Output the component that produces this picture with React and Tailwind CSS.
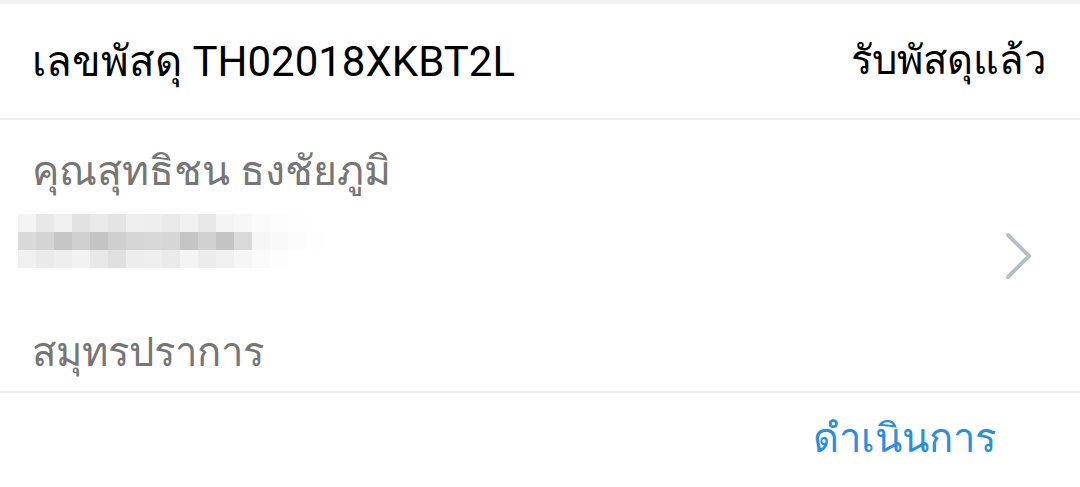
const blur = [
  ['#f4f4f4', '#e8e8e8', '#f0f0f0', '#e2e2e2', '#eaeaea', '#e4e4e4', '#efefef', '#eeeeee', '#eaeaea', '#f1f1f1', '#e8e8e8', '#f4f4f4', '#f7f7f7', '#fbfbfb', '#fdfdfd', '#fefefe', '#ffffff'],
  ['#d9d9d9', '#d4d4d4', '#c6c6c6', '#d0d0d0', '#c4c4c4', '#cfcfcf', '#d6d6d6', '#d8d8d8', '#d6d6d6', '#c5c5c5', '#d1d1d1', '#c4c4c4', '#dadada', '#f6f6f6', '#f9f9f9', '#fcfcfc', '#fefefe'],
  ['#f0f0f0', '#eaeaea', '#eeeeee', '#f2f2f2', '#e8e8e8', '#e0e0e0', '#ededed', '#efefef', '#eaeaea', '#f4f4f4', '#ececec', '#f0f0f0', '#f6f6f6', '#fafafa', '#fdfdfd', '#ffffff', '#ffffff'],
];

export default function App() {
  return (
    <div className="w-[1080px] h-[487px] bg-white overflow-hidden font-['Roboto','Noto_Sans',sans-serif]">
      <div className="h-[4px] bg-[#f2f2f2]" />

      {/* Header */}
      <div className="h-[116px] flex items-center justify-between pl-[32px] pr-[34px] border-b-2 border-[#f0f0f0]">
        <span className="text-[42px] text-black">เลขพัสดุ TH02018XKBT2L</span>
        <span className="text-[40px] text-black">รับพัสดุแล้ว</span>
      </div>

      {/* Address */}
      <div className="h-[273px] flex items-center justify-between pr-[46px] border-b-2 border-[#f0f0f0]">
        <div className="flex flex-col pt-[12px]">
          <span className="pl-[32px] text-[41px] text-[#767676] leading-[60px]">คุณสุทธิชน ธงชัยภูมิ</span>
          <div className="mt-[13px] flex flex-col">
            {blur.map((row, i) => (
              <div key={i} className="flex h-[18px]">
                {row.map((c, j) => (
                  <div key={j} className="w-[18px] h-[18px]" style={{ backgroundColor: c, marginLeft: j === 0 ? 18 : 0 }} />
                ))}
              </div>
            ))}
          </div>
          <span className="mt-[55px] pl-[32px] text-[40px] text-[#767676] leading-[60px]">สมุทรปราการ</span>
        </div>
        <svg width="30" height="50" viewBox="0 0 30 50" fill="none">
          <polyline points="4,4 25,25 4,46" stroke="#b4c0c8" strokeWidth="4" strokeLinecap="round" strokeLinejoin="round" />
        </svg>
      </div>

      {/* Footer */}
      <div className="h-[92px] flex items-center justify-end pr-[84px]">
        <span className="text-[40px] text-[#2a8fdc]">ดำเนินการ</span>
      </div>
    </div>
  );
}
